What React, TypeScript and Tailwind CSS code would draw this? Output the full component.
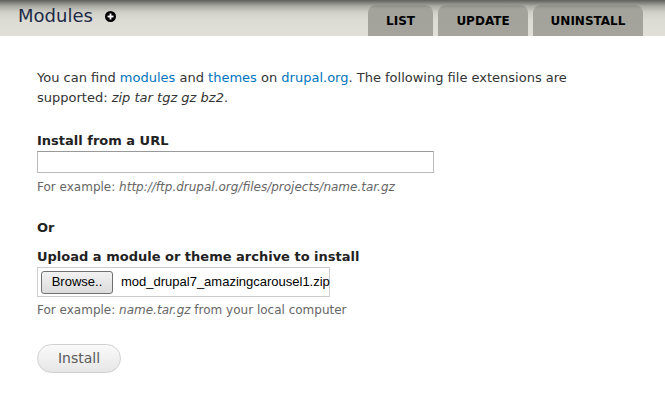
export default function App() {
  return (
    <div className="min-h-screen w-[665px] bg-white font-['DejaVu_Sans',sans-serif] text-[#333] text-[13px]">
      {/* Header with tabs */}
      <div className="h-[36px] bg-[linear-gradient(to_bottom,#5f5f5b_0px,#a9a9a3_6px,#cfcfc8_12px,#dcdcd5_20px,#e0e0d9_36px)] flex items-end justify-between pl-[18px] pr-[22px]">
        <div className="flex items-center self-start mt-[6px]">
          <h1 className="text-[18px] leading-[20px] text-[#1d2a45] font-normal">Modules</h1>
          <span className="ml-[12px] mt-[1px] w-[11px] h-[11px] rounded-full bg-black flex items-center justify-center">
            <svg width="7" height="7" viewBox="0 0 7 7">
              <rect x="2.6" y="0.5" width="1.8" height="6" fill="#fff" />
              <rect x="0.5" y="2.6" width="6" height="1.8" fill="#fff" />
            </svg>
          </span>
        </div>
        <div className="flex gap-[5px]">
          {[
            { label: "LIST", w: "w-[65px]" },
            { label: "UPDATE", w: "w-[90px]" },
            { label: "UNINSTALL", w: "w-[110px]" },
          ].map((t) => (
            <div
              key={t.label}
              className={`${t.w} h-[31px] rounded-t-[8px] bg-[linear-gradient(to_bottom,#8e8e88_0px,#a3a39c_4px,#a4a49d_31px)] flex items-center justify-center text-[12px] font-bold text-black`}
            >
              {t.label}
            </div>
          ))}
        </div>
      </div>

      {/* Content */}
      <div className="pl-[37px] pt-[32px]">
        <p className="leading-[20px] w-[540px]">
          You can find <span className="text-[#0074bd]">modules</span> and{" "}
          <span className="text-[#0074bd]">themes</span> on <span className="text-[#0074bd]">drupal.org</span>. The
          following file extensions are supported: <em>zip tar tgz gz bz2</em>.
        </p>

        <div className="mt-[24px]">
          <div className="font-bold leading-[18px] text-[#222]">Install from a URL</div>
          <div className="mt-[1px] w-[397px] h-[22px] border border-[#bbb] border-t-[#999] bg-white" />
          <div className="mt-[7px] text-[12px] text-[#666] leading-[15px]">
            For example: <em>http://ftp.drupal.org/files/projects/name.tar.gz</em>
          </div>
        </div>

        <div className="mt-[24px] font-bold leading-[18px] text-[#222]">Or</div>

        <div className="mt-[11px]">
          <div className="font-bold leading-[18px] text-[#222]">Upload a module or theme archive to install</div>
          <div className="mt-[1px] w-[293px] h-[30px] border border-[#ccc] flex items-center pl-[3px] font-['Liberation_Sans',sans-serif]">
            <div className="shrink-0 w-[72px] h-[23px] rounded-[3px] border border-[#707070] bg-[linear-gradient(to_bottom,#f2f2f2,#dcdcdc)] text-[13px] text-black flex items-center justify-center">
              Browse..
            </div>
            <span className="ml-[8px] text-[13px] text-black whitespace-nowrap">mod_drupal7_amazingcarousel1.zip</span>
          </div>
          <div className="mt-[6px] text-[12px] text-[#666] leading-[15px]">
            For example: <em>name.tar.gz</em> from your local computer
          </div>
        </div>

        <div className="mt-[26px] w-[84px] h-[29px] rounded-full border border-[#d0d0d0] bg-[linear-gradient(to_bottom,#fafafa,#e6e6e6)] flex items-center justify-center text-[14px] text-[#5a5a5a]">
          Install
        </div>
      </div>
    </div>
  );
}
